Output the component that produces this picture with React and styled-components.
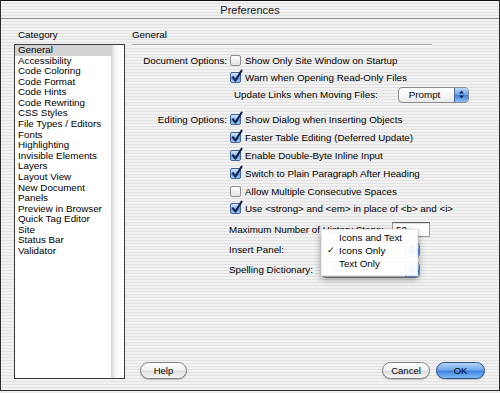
import React from 'react'
import styled, { createGlobalStyle } from 'styled-components'

const GlobalStyle = createGlobalStyle`
  html, body {
    margin: 0;
    padding: 0;
    background: #ececec;
  }
  body {
    font-family: "Liberation Sans", Arial, sans-serif;
  }
`

const stripes = `repeating-linear-gradient(to bottom, #f2f2f2 0px, #f2f2f2 2px, #e2e2e2 2px, #e2e2e2 3px)`

const Window = styled.div`
    width: 500px;
    height: 391px;
    box-sizing: border-box;
    border: 1px solid #2e2e2e;
    border-top-color: #111;
    background: ${stripes};
    display: flex;
    flex-direction: column;
    font-size: 9.8px;
    color: #000;
`

const TitleBar = styled.div`
    height: 17px;
    flex: none;
    border-bottom: 1px solid #8c8c8c;
    display: flex;
    align-items: center;
    justify-content: center;
    font-size: 11px;
    color: #1a1a1a;
`

const Body = styled.div`
    flex: 1;
    min-height: 0;
    display: flex;
    gap: 7px;
    padding: 10px 13px 11px 13px;
`

const LeftCol = styled.div`
    width: 111px;
    flex: none;
    display: flex;
    flex-direction: column;
`

const ColTitle = styled.div`
    height: 12px;
    line-height: 12px;
    padding-left: ${p => p.$indent || 0}px;
    margin-bottom: 3px;
`

const ListBox = styled.div`
    flex: 1;
    display: flex;
    border: 1px solid #3a3a3a;
    background: #fff;
`

const Items = styled.div`
    flex: 1;
`

const Item = styled.div`
    height: 10.58px;
    line-height: 10.58px;
    padding-left: 3px;
    white-space: nowrap;
    background: ${p => (p.$selected ? '#d3d3d3' : 'transparent')};
`

const Track = styled.div`
    width: 13px;
    background: linear-gradient(to right, #cfcfcf 0px, #e6e6e6 2px, #f6f6f6 5px, #fff 9px);
`

const RightCol = styled.div`
    flex: 1;
    display: flex;
    flex-direction: column;
`

const Separator = styled.div`
    width: 300px;
    border-top: 1px solid #a3a3a3;
    border-bottom: 1px solid #fbfbfb;
    margin-bottom: 6px;
`

const Group = styled.div`
    display: grid;
    grid-template-columns: 95px 1fr;
    column-gap: 3px;
    margin-top: ${p => p.$top || 0}px;
`

const GroupLabel = styled.div`
    text-align: right;
    white-space: nowrap;
    line-height: ${p => p.$h}px;
`

const Rows = styled.div`
    display: flex;
    flex-direction: column;
`

const Row = styled.div`
    height: ${p => p.$h}px;
    display: flex;
    align-items: center;
    white-space: nowrap;
    padding-left: ${p => p.$indent || 0}px;
`

const Box = styled.span`
    position: relative;
    width: 11px;
    height: 11px;
    box-sizing: border-box;
    flex: none;
    margin-right: 4px;
    border-radius: 2px;
    border: 1px solid ${p => (p.$on ? '#3f6197' : '#8e8e8e')};
    background: ${p =>
        p.$on
            ? 'linear-gradient(#d6e8fc 0%, #8dbbf1 45%, #5a97e4 55%, #a8d1f9 100%)'
            : 'linear-gradient(#ffffff 0%, #f1f1f1 50%, #e4e4e4 100%)'};
`

const Tick = styled.svg`
    position: absolute;
    left: 0;
    top: -3px;
    overflow: visible;
`

const Popup = styled.div`
    position: relative;
    width: ${p => p.$w}px;
    height: 16px;
    box-sizing: border-box;
    display: flex;
    border: 1px solid #8a8a8a;
    border-radius: 4px;
    background: linear-gradient(#ffffff 0%, #f7f7f7 50%, #e9e9e9 100%);
    margin-left: ${p => p.$left || 0}px;
`

const PopupText = styled.span`
    flex: 1;
    padding-left: 10px;
    line-height: 14px;
    white-space: nowrap;
    color: ${p => (p.$faint ? '#b0b0b0' : '#000')};
`

const PopupArrows = styled.span`
    width: 13px;
    flex: none;
    display: flex;
    align-items: center;
    justify-content: center;
    border-left: 1px solid #48699c;
    border-radius: 0 3px 3px 0;
    background: linear-gradient(#bcd8f8 0%, #6aa3ea 48%, #3e80dc 52%, #8cc2f6 100%);
`

const Field = styled.div`
    width: 38px;
    height: 15px;
    box-sizing: border-box;
    border: 1px solid #9a9a9a;
    border-top-color: #606060;
    background: #fff;
    box-shadow: inset 0 1px 1px rgba(0, 0, 0, 0.15);
    padding-left: 3px;
    line-height: 13px;
`

const Lower = styled.div`
    margin: 2px 0 0 97px;
    display: flex;
    flex-direction: column;
`

const FieldLabel = styled.span`
    width: ${p => p.$w}px;
    flex: none;
`

const Menu = styled.div`
    position: absolute;
    left: -2px;
    top: -14px;
    width: 97px;
    box-sizing: border-box;
    padding: 1px 0 5px 0;
    background: rgba(255, 255, 255, 0.95);
    border: 1px solid rgba(0, 0, 0, 0.08);
    box-shadow: 0 3px 7px rgba(0, 0, 0, 0.4);
    z-index: 5;
`

const MenuItem = styled.div`
    height: 13px;
    line-height: 13px;
    display: flex;
    white-space: nowrap;
`

const MenuCheck = styled.span`
    width: 17px;
    flex: none;
    padding-left: 5px;
    box-sizing: border-box;
    font-family: "DejaVu Sans", sans-serif;
    font-size: 9px;
`

const Footer = styled.div`
    margin-top: auto;
    display: flex;
    gap: 6px;
    padding-left: 8px;
    padding-right: 1px;
`

const Button = styled.button`
    width: ${p => p.$w}px;
    height: 17px;
    padding: 0;
    margin-left: ${p => (p.$push ? 'auto' : '0')};
    border-radius: 9px;
    font-family: inherit;
    font-size: 9.5px;
    color: #000;
    border: 1px solid ${p => (p.$primary ? '#2c4c85' : '#7f7f7f')};
    background: ${p =>
        p.$primary
            ? 'linear-gradient(#b6d6f8 0%, #70a9ee 45%, #3d82df 55%, #7fbcf6 100%)'
            : 'linear-gradient(#ffffff 0%, #f2f2f2 45%, #dedede 55%, #f6f6f6 100%)'};
    box-shadow: 0 1px 1px rgba(0, 0, 0, 0.2);
`

const categories = [
    'General', 'Accessibility', 'Code Coloring', 'Code Format', 'Code Hints',
    'Code Rewriting', 'CSS Styles', 'File Types / Editors', 'Fonts', 'Highlighting',
    'Invisible Elements', 'Layers', 'Layout View', 'New Document', 'Panels',
    'Preview in Browser', 'Quick Tag Editor', 'Site', 'Status Bar', 'Validator',
]

const editing = [
    ['Show Dialog when Inserting Objects', true],
    ['Faster Table Editing (Deferred Update)', true],
    ['Enable Double-Byte Inline Input', true],
    ['Switch to Plain Paragraph After Heading', true],
    ['Allow Multiple Consecutive Spaces', false],
    ['Use <strong> and <em> in place of <b> and <i>', true],
]

function Check({ on }) {
    return (
        <Box $on={on}>
            {on && (
                <Tick width="11" height="11" viewBox="0 0 11 11">
                    <path d="M1.8 7.2 L4.4 10.6 L10.6 0.6" fill="none" stroke="#16224a"
                        strokeWidth="2" strokeLinecap="round" strokeLinejoin="round" />
                </Tick>
            )}
        </Box>
    )
}

function Arrows() {
    return (
        <svg width="5" height="9" viewBox="0 0 5 9">
            <path d="M2.5 0.5 L4.8 3.6 L0.2 3.6 Z M2.5 8.5 L4.8 5.4 L0.2 5.4 Z" fill="#14203d" />
        </svg>
    )
}

function PopupButton({ w, left, text, faint, children }) {
    return (
        <Popup $w={w} $left={left}>
            <PopupText $faint={faint}>{text}</PopupText>
            <PopupArrows><Arrows /></PopupArrows>
            {children}
        </Popup>
    )
}

export default function App() {
    return (
        <>
            <GlobalStyle />
            <Window>
                <TitleBar>Preferences</TitleBar>
                <Body>
                    <LeftCol>
                        <ColTitle $indent={4}>Category</ColTitle>
                        <ListBox>
                            <Items>
                                {categories.map((c, i) => (
                                    <Item key={c} $selected={i === 0}>{c}</Item>
                                ))}
                            </Items>
                            <Track />
                        </ListBox>
                    </LeftCol>

                    <RightCol>
                        <ColTitle>General</ColTitle>
                        <Separator />

                        <Group>
                            <GroupLabel $h={17}>Document Options:</GroupLabel>
                            <Rows>
                                <Row $h={17}><Check on={false} />Show Only Site Window on Startup</Row>
                                <Row $h={17}><Check on />Warn when Opening Read-Only Files</Row>
                                <Row $h={17} $indent={4}>
                                    Update Links when Moving Files:
                                    <PopupButton w={71} left={20} text="Prompt" />
                                </Row>
                            </Rows>
                        </Group>

                        <Group $top={8}>
                            <GroupLabel $h={17.8}>Editing Options:</GroupLabel>
                            <Rows>
                                {editing.map(([label, on]) => (
                                    <Row key={label} $h={17.8}><Check on={on} />{label}</Row>
                                ))}
                            </Rows>
                        </Group>

                        <Lower>
                            <Row $h={20}>
                                <FieldLabel $w={163}>Maximum Number of History Steps:</FieldLabel>
                                <Field>50</Field>
                            </Row>
                            <Row $h={20}>
                                <FieldLabel $w={93}>Insert Panel:</FieldLabel>
                                <PopupButton w={98} text="">
                                    <Menu>
                                        <MenuItem><MenuCheck />Icons and Text</MenuItem>
                                        <MenuItem><MenuCheck>✓</MenuCheck>Icons Only</MenuItem>
                                        <MenuItem><MenuCheck />Text Only</MenuItem>
                                    </Menu>
                                </PopupButton>
                            </Row>
                            <Row $h={20}>
                                <FieldLabel $w={93}>Spelling Dictionary:</FieldLabel>
                                <PopupButton w={98} text="English" faint />
                            </Row>
                        </Lower>

                        <Footer>
                            <Button $w={47}>Help</Button>
                            <Button $w={48} $push>Cancel</Button>
                            <Button $w={49} $primary>OK</Button>
                        </Footer>
                    </RightCol>
                </Body>
            </Window>
        </>
    )
}
